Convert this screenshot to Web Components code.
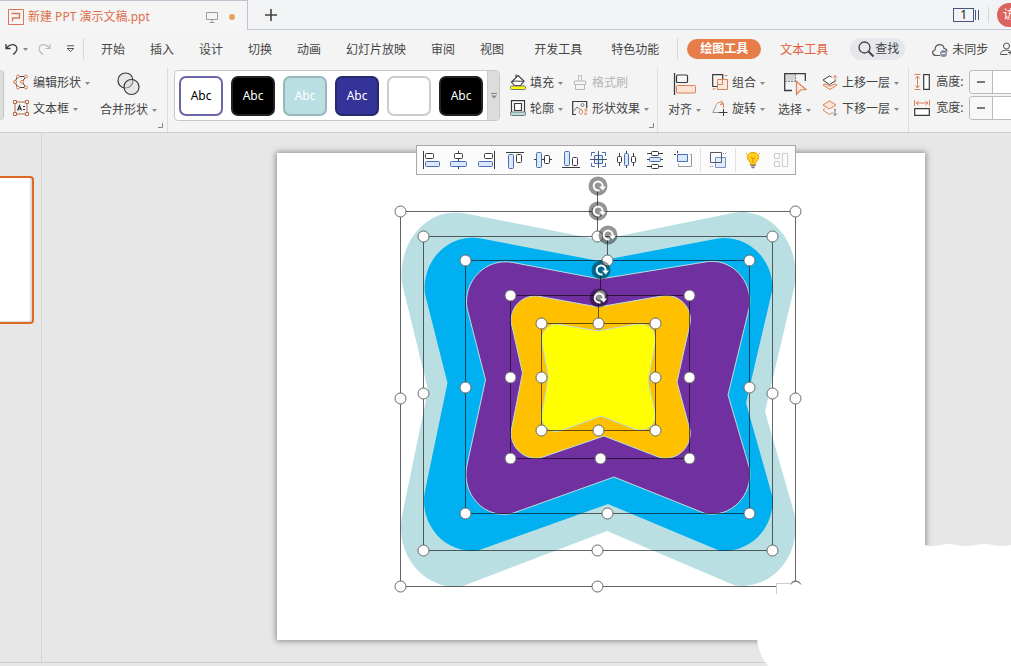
<!DOCTYPE html>
<html lang="zh-CN">
<head>
<meta charset="utf-8">
<title>新建 PPT 演示文稿.ppt</title>
<style>
    body {
        margin: 0;
        font-family: "Noto Sans", "Noto Sans CJK SC", sans-serif;
        font-size: 12px;
        line-height: 18px;
        color: #444;
    }
</style>
</head>
<body>
<office-window></office-window>

<script>
const K = '#3a3a3a';
const O = '#d9825a';
const B = '#4a6fb5';
const F = '#dbe8fb';

// name: [width, height, markup]
const ICONS = {
    ppt: [16, 16, `<g fill="none" stroke="#dd7358"><path d="M.5.5h15v15H.5z"/><path d="M3.500 4.500h8v4.500h-7V12.500" stroke-width="1.300"/></g>`],
    monitor: [12, 12, `<path d="M.5 1.500h11v7H.5zM6 8.500v2.500M3.500 11.500h5" fill="none" stroke="#999"/>`],
    plus: [12, 12, `<path d="M6 0v12M0 6h12" stroke="#444" stroke-width="1.600"/>`],
    undo: [13, 12, `<path d="M1 1v4.500h4.500M1.500 5C4 1.500 8 .8 10.500 2.500c2.500 2 2 6-2.500 9" fill="none" stroke="${K}" stroke-width="1.300"/>`],
    redo: [13, 12, `<path d="M12 1v4.500H7.500M11.500 5C9 1.500 5 .8 2.500 2.500 0 4.500.5 8.500 5 11.500" fill="none" stroke="#bbb" stroke-width="1.200"/>`],
    more: [9, 8, `<path d="M1 .8h7M1.200 3.500l3.300 3 3.300-3z" fill="none" stroke="#555"/>`],
    caret: [5, 3, `<path d="M0 0h5L2.500 3z" fill="#888"/>`],
    dropCaret: [6, 6, `<path d="M0 .5h6" stroke="#888"/><path d="M0 2.500h6L3 5.500z" fill="#888"/>`],
    search: [16, 16, `<circle cx="6.500" cy="6.500" r="5.500" fill="none" stroke="#444" stroke-width="1.300"/><path d="M10.500 10.500l5 5" stroke="#444" stroke-width="2"/>`],
    cloud: [16, 14, `<path d="M8 12.500H4C0 12.500-.5 7.500 3 7 3 0 12 0 12 5.500c2.500 0 3 2 2.800 3" fill="none" stroke="#555" stroke-width="1.200"/><circle cx="11.500" cy="10.500" r="3.500" fill="#8a91a5"/><path d="M9.500 10.500h4" stroke="#fff"/>`],
    person: [12, 14, `<circle cx="6.500" cy="4" r="3" fill="none" stroke="#555"/><path d="M9 8.500C4 7.500.5 9 .5 12.500h7M10 8.500v4M8 10.500h4" fill="none" stroke="#555"/>`],
    editShape: [16, 16, `<path d="M4.500 2.500H13L9 8l4 5.500H4.500L2 8z" fill="none" stroke="#444"/><g fill="#f4f4f5" stroke="${O}"><circle cx="5" cy="2.500" r="1.500"/><circle cx="13" cy="2.500" r="1.500"/><circle cx="9" cy="8" r="1.500"/><circle cx="13" cy="13.500" r="1.500"/><circle cx="5" cy="13.500" r="1.500"/><circle cx="2" cy="8" r="1.500"/></g>`],
    textBox: [16, 16, `<path d="M2 2h12v12H2z" fill="none" stroke="#b56a48"/><path d="M.5.5h3v3h-3zM12.500.5h3v3h-3zM.5 12.500h3v3h-3zM12.500 12.500h3v3h-3z" fill="#f4f4f5" stroke="#b56a48"/><path d="M4.500 10.500L6.500 5.500l2 5M5 9h3" fill="none" stroke="#333" stroke-width="1.200"/><path d="M10 6.500h2M10 9.500h2" stroke="#333"/>`],
    merge: [24, 24, `<g fill="#d9d9d9" fill-opacity=".5" stroke="${K}" stroke-width="1.200"><circle cx="8.500" cy="8.500" r="7.500"/><circle cx="14.500" cy="15" r="7.500"/></g>`],
    fill: [16, 16, `<path d="M8 1.500L14 7l-3.500 4.500h-6L1.500 8zM6 3V.5" fill="#fff" stroke="${K}" stroke-width="1.100"/><path d="M1.500 8c4-2 8 0 12.500-1" fill="none" stroke="${K}"/><rect x=".5" y="12" width="15" height="3.500" rx="1" fill="#ff0" stroke="#777"/>`],
    outline: [16, 16, `<path d="M1.500 12V.7h13V12M4.500 10.500v-7h7v7z" fill="#fff" stroke="${K}" stroke-width="1.200"/><rect x=".5" y="12" width="15" height="3.500" rx="1" fill="#b9dfe2" stroke="#777"/>`],
    brush: [16, 16, `<path d="M6.500 7V1.500h3V7M2.500 7h11v3.500h-11zM3.500 10.500v5h9v-5" fill="none" stroke="#bbb"/>`],
    effect: [16, 16, `<path d="M4 14.500H.7V1.500h14V8M.7 4V1.500" fill="none" stroke="${K}" stroke-width="1.200"/><circle cx="10.500" cy="5" r="1.500" fill="none" stroke="#777"/><path d="M2 11l3-4 4 3" fill="none" stroke="#777"/><path d="M9 9.500l2 2.500-2 2.500L7 12zM14 8.500l1.300 1.500-1.300 1.500-1.300-1.500zM13.500 12.500l1 1.300-1 1.200-1-1.200z" fill="#fff" stroke="${O}"/>`],
    align: [24, 24, `<path d="M1.500 1v22" stroke="${K}" stroke-width="1.300"/><rect x="3.500" y="3" width="11" height="7.500" rx="1" fill="#f8f8f8" stroke="${K}" stroke-width="1.200"/><rect x="3.500" y="13.500" width="19" height="7.500" rx="1" fill="#fbe4d6" stroke="${O}"/>`],
    group: [16, 16, `<path d="M6 12.500H.7V.7h10v4.500" fill="none" stroke="${K}" stroke-width="1.200"/><path d="M5.500 5.500h10v10h-10z" fill="#fbe4d6" fill-opacity=".7" stroke="${O}"/><path d="M10.500 6v4.500H6" fill="none" stroke="${O}"/><path d="M12.500 1.500h3M.5 15h3" stroke="${O}"/>`],
    rotate: [16, 16, `<path d="M8 12.500H.8L4.500 4.500" fill="none" stroke="#999"/><path d="M7 12.500h8.500M11.500 9v7" stroke="${K}"/><path d="M4.500 4c2-2 4.500-2 7 0v4M9 .5l2.500 3.500L8 4.500" fill="none" stroke="${O}"/>`],
    select: [24, 24, `<path d="M2 2h11v7H2z" fill="#d5d5d5"/><path d="M9 18.500H1.700V1.700h20.600V9" fill="none" stroke="${K}" stroke-width="1.300"/><path d="M2 9.500h11M12.500 2v8" stroke="#888" stroke-dasharray="2 1"/><path d="M13.500 9.500l9.500 8-5.500.5-4 4.500z" fill="#fdeade" stroke="${O}" stroke-width="1.200"/>`],
    up: [16, 16, `<path d="M1 11l7 4.500 7-4.500-2-1.200L8 12 3 9.800z" fill="#fbe4d6" stroke="${O}"/><path d="M7.500 2L1 6l6.500 4.500L14 6.500M7.500 2l2 1" fill="#fff" stroke="${K}"/><path d="M13 7V1.500M11 3.500l2-2 2 2" fill="none" stroke="${O}"/>`],
    down: [16, 16, `<path d="M7.500.8L1 5l6.500 4L14 5z" fill="#fbe4d6" stroke="${O}"/><path d="M3 8.500L1 10l6.500 4.500 3-2M12 9l2 1.200" fill="none" stroke="${O}"/><path d="M13 9v6.500M11 13.500l2 2 2-2" fill="none" stroke="#777"/>`],
    heightIcon: [16, 16, `<path d="M.5.5h6M.5 15.500h6M3.500 2v12M1.500 4.500l2-2.500 2 2.500M1.500 11.500l2 2.500 2-2.500" fill="none" stroke="${O}"/><path d="M9.700.7h5.600v14.600H9.700z" fill="#fff" stroke="${K}" stroke-width="1.200"/>`],
    widthIcon: [16, 16, `<path d="M.5 0v6M15.500 0v6M2 3h12M4.500 1L2 3l2.500 2M11.500 1L14 3l-2.500 2" fill="none" stroke="${O}"/><path d="M.7 8.700h14.600v6.600H.7z" fill="#fff" stroke="${K}" stroke-width="1.200"/>`],
    corner: [5, 5, `<path d="M0 4.500h4.500V0" fill="none" stroke="#888"/>`],
    alLeft: [18, 18, `<path d="M1.500 0v18" stroke="${K}"/><rect x="3.500" y="2.500" width="8" height="5" rx="1" fill="#fff" stroke="${K}"/><rect x="3.500" y="10.500" width="14" height="5" rx="1" fill="${F}" stroke="${B}"/>`],
    alCenter: [18, 18, `<path d="M8.500 0v18" stroke="${K}"/><rect x="4.500" y="2.500" width="8" height="5" rx="1" fill="#fff" stroke="${K}"/><rect x=".5" y="10.500" width="16" height="5" rx="1" fill="${F}" stroke="${B}"/>`],
    alRight: [18, 18, `<path d="M16.500 0v18" stroke="${K}"/><rect x="6.500" y="2.500" width="8" height="5" rx="1" fill="#fff" stroke="${K}"/><rect x=".5" y="10.500" width="14" height="5" rx="1" fill="${F}" stroke="${B}"/>`],
    alTop: [18, 18, `<path d="M0 1.500h18" stroke="${K}"/><rect x="2.500" y="3.500" width="5" height="14" rx="1" fill="${F}" stroke="${B}"/><rect x="10.500" y="3.500" width="5" height="8" rx="1" fill="#fff" stroke="${K}"/>`],
    alMiddle: [18, 18, `<path d="M0 8.500h18" stroke="${K}"/><rect x="2.500" y="1.500" width="5" height="15" rx="1" fill="${F}" stroke="${B}"/><rect x="10.500" y="4.500" width="5" height="8" rx="1" fill="#fff" stroke="${K}"/>`],
    alBottom: [18, 18, `<path d="M0 16.500h18" stroke="${K}"/><rect x="2.500" y=".5" width="5" height="14" rx="1" fill="${F}" stroke="${B}"/><rect x="10.500" y="6.500" width="5" height="8" rx="1" fill="#fff" stroke="${K}"/>`],
    toCenter: [18, 18, `<path d="M5 1.500H1.500V5M12 1.500h3.500V5M5 15.500H1.500V12M12 15.500h3.500V12" fill="none" stroke="${B}"/><path d="M4.500 4.500h8v8h-8z" fill="${F}" stroke="${B}"/><path d="M8.500 0v17M0 8.500h17" stroke="#456"/>`],
    distH: [18, 18, `<path d="M1.500 2v13M8.500 0v17M15.500 2v13" stroke="${K}"/><rect x="-.5" y="5.500" width="4" height="6" rx="1" fill="#fff" stroke="${K}"/><rect x="6.500" y="2.500" width="4" height="12" rx="1" fill="${F}" stroke="${B}"/><rect x="13.500" y="5.500" width="4" height="6" rx="1" fill="#fff" stroke="${K}"/>`],
    distV: [18, 18, `<path d="M1 2.500h16M1 8.500h16M1 15.500h16" stroke="${K}"/><rect x="5.500" y=".5" width="7" height="4" rx="1" fill="#fff" stroke="${K}"/><rect x="3.500" y="6.500" width="11" height="4" rx="1" fill="${F}" stroke="${B}"/><rect x="5.500" y="13.500" width="7" height="4" rx="1" fill="#fff" stroke="${K}"/>`],
    sameSize: [18, 18, `<path d="M3.500 3.500h10v7h-10z" fill="${F}" stroke="${B}"/><path d="M3.500 0v3M0 3.500h3" stroke="#333" stroke-dasharray="2 1"/><path d="M16 3.500h1.500v12h-13V13" fill="none" stroke="#999"/>`],
    groupBlue: [18, 18, `<path d="M1.500 1.500h11v10h-11z" fill="none" stroke="#556"/><path d="M6.500 6.500h10v10h-10z" fill="${F}" fill-opacity=".8" stroke="#7b8fc0"/><path d="M12.500 6v5.500H6" fill="none" stroke="#556"/><path d="M14 2.500h3M1 15.500h3" stroke="#88a" stroke-dasharray="1 1"/>`],
    bulb: [18, 18, `<path d="M9 1.500c-7 0-7 7-2.700 9.500v2.500h5.400V11C16 8.500 16 1.500 9 1.500z" fill="#ffcf1f" stroke="#e8a200"/><path d="M7 6l2 2 2-2M9 8v4" fill="none" stroke="#d98a00"/><path d="M6.500 14.500h5M7.500 16.500h3" stroke="#777" stroke-width="1.500"/><path d="M2 2l1 1M16 2l-1 1" stroke="#e8a200"/>`],
    panes: [18, 18, `<path d="M2.500 2.500h5v5h-5zM2.500 10.500h5v5h-5zM10.500 2.500h5v13h-5z" fill="none" stroke="#ccc"/>`]
};

const RESET = `
    button {
        display: flex;
        align-items: center;
        margin: 0;
        padding: 0;
        border: 0;
        background: none;
        font: inherit;
        color: inherit;
        white-space: nowrap;
        cursor: pointer;
    }
`;

class UiIcon extends HTMLElement {
    constructor() {
        super();
        this.attachShadow({mode: 'open'});
    }

    connectedCallback() {
        const [w, h, body] = ICONS[this.getAttribute('name')];
        this.shadowRoot.innerHTML = `
            <style>
                :host { display: block; flex: none; }
                svg { display: block; overflow: visible; }
            </style>
            <svg width="${w}" height="${h}" viewBox="0 0 ${w} ${h}" aria-hidden="true">${body}</svg>
        `;
    }
}
customElements.define('ui-icon', UiIcon);

// icon + label + optional drop-down caret, "big" puts the label under the icon
class ToolButton extends HTMLElement {
    constructor() {
        super();
        this.attachShadow({mode: 'open'});
    }

    connectedCallback() {
        const caret = this.hasAttribute('plain') ? '' : '<ui-icon name="caret"></ui-icon>';
        this.shadowRoot.innerHTML = `
            <style>
                ${RESET}
                :host { display: block; }
                button { gap: 4px; height: 26px; }
                .label { display: flex; align-items: center; gap: 4px; padding-top: 2px; }
                :host([big]) button { flex-direction: column; height: auto; gap: 3px; padding-top: 4px; }
                :host([disabled]) { color: #b4b4b4; }
            </style>
            <button type="button" ${this.hasAttribute('disabled') ? 'disabled' : ''}>
                <ui-icon name="${this.getAttribute('icon')}"></ui-icon>
                <span class="label"><slot></slot>${caret}</span>
            </button>
        `;
    }
}
customElements.define('tool-button', ToolButton);

class TabStrip extends HTMLElement {
    constructor() {
        super();
        this.attachShadow({mode: 'open'}).innerHTML = `
            <style>
                ${RESET}
                :host { display: flex; height: 30px; background: #f2f3f5; }
                .tab {
                    box-sizing: border-box;
                    display: flex;
                    align-items: center;
                    gap: 4px;
                    width: 248px;
                    padding: 3px 12px 0 8px;
                    border-top: 1px solid #c3c3d0;
                    border-right: 1px solid #bfc2d4;
                    background: #f5f5f6;
                    color: #dd7048;
                }
                .name { flex: 1; }
                .dot { width: 6px; height: 6px; margin-left: 7px; border-radius: 3px; background: #e9a25c; }
                .rest {
                    flex: 1;
                    display: flex;
                    align-items: center;
                    padding-left: 17px;
                    border-bottom: 1px solid #c5c8d6;
                }
                .count {
                    margin-left: auto;
                    padding: 0 6px;
                    border: 1px solid #46557c;
                    line-height: 12px;
                    color: #222;
                }
                .bars { box-sizing: border-box; width: 4px; height: 10px; margin: 0 1px; border: solid #46557c; border-width: 0 1px; }
                .sep { width: 1px; height: 16px; margin: 0 8px; background: #d5d5da; }
                .login {
                    overflow: hidden;
                    width: 14px;
                    height: 24px;
                    padding-left: 6px;
                    box-sizing: border-box;
                    border-radius: 12px 0 0 12px;
                    background: #dc6460;
                    color: #fff;
                }
            </style>
            <div class="tab">
                <ui-icon name="ppt"></ui-icon>
                <span class="name">新建 PPT 演示文稿.ppt</span>
                <ui-icon name="monitor"></ui-icon>
                <span class="dot"></span>
            </div>
            <div class="rest">
                <button type="button" aria-label="新建标签"><ui-icon name="plus"></ui-icon></button>
                <button type="button" class="count">1</button>
                <span class="bars"></span>
                <span class="sep"></span>
                <button type="button" class="login">访</button>
            </div>
        `;
    }
}
customElements.define('tab-strip', TabStrip);

class MenuBar extends HTMLElement {
    constructor() {
        super();
        this.attachShadow({mode: 'open'});
    }

    connectedCallback() {
        const items = list => list.map(t => `<button type="button">${t}</button>`).join('');
        this.shadowRoot.innerHTML = `
            <style>
                ${RESET}
                :host {
                    display: flex;
                    align-items: center;
                    height: 38px;
                    padding-left: 5px;
                    background: #f4f4f5;
                    white-space: nowrap;
                }
                :host > * { flex: none; }
                .quick { display: flex; align-items: center; }
                .undo { gap: 5px; margin-right: 10px; }
                .redo { margin-right: 15px; }
                .sep { width: 1px; height: 22px; background: #d9d9dc; }
                nav { display: flex; gap: 25px; margin-left: 17px; }
                nav, .text, .sync { padding-top: 2px; }
                nav.wide { gap: 29px; margin: 0 18px 0 30px; }
                .quick + .sep { margin-left: 8px; }
                .active {
                    height: 20px;
                    margin: 0 19px 0 9px;
                    padding: 0 13px;
                    border-radius: 10px;
                    background: #e67c48;
                    color: #fff;
                    font-weight: bold;
                }
                .text { color: #e0603a; }
                .find {
                    gap: 1px;
                    height: 22px;
                    margin: 0 27px 0 22px;
                    padding: 0 6px 0 8px;
                    border-radius: 11px;
                    background: #e5e7ec;
                }
                .sync { gap: 4px; margin-right: 12px; }
            </style>
            <div class="quick">
                <button type="button" class="undo" aria-label="撤销"><ui-icon name="undo"></ui-icon><ui-icon name="caret"></ui-icon></button>
                <button type="button" class="redo" aria-label="恢复"><ui-icon name="redo"></ui-icon></button>
                <button type="button" aria-label="更多"><ui-icon name="more"></ui-icon></button>
            </div>
            <span class="sep"></span>
            <nav>${items(['开始', '插入', '设计', '切换', '动画', '幻灯片放映', '审阅', '视图'])}</nav>
            <nav class="wide">${items(['开发工具', '特色功能'])}</nav>
            <span class="sep"></span>
            <button type="button" class="active">绘图工具</button>
            <button type="button" class="text">文本工具</button>
            <button type="button" class="find"><ui-icon name="search"></ui-icon>查找</button>
            <button type="button" class="sync"><ui-icon name="cloud"></ui-icon>未同步</button>
            <button type="button" aria-label="协作"><ui-icon name="person"></ui-icon></button>
        `;
    }
}
customElements.define('menu-bar', MenuBar);

class StyleGallery extends HTMLElement {
    constructor() {
        super();
        this.attachShadow({mode: 'open'}).innerHTML = `
            <style>
                ${RESET}
                :host {
                    display: flex;
                    border: 1px solid #c8c8c8;
                    border-radius: 4px;
                    background: #fff;
                    overflow: hidden;
                }
                .list { display: flex; gap: 8px; padding: 5px 4px 4px; }
                .list button {
                    box-sizing: border-box;
                    justify-content: center;
                    width: 44px;
                    height: 40px;
                    border: 2px solid #222;
                    border-radius: 7px;
                    background: #000;
                    color: #fff;
                }
                .list .line { border-color: #6a68a8; background: #fff; color: #000; }
                .list .teal { border-color: #97b8ba; background: #b9dfe2; }
                .list .navy { border-color: #28286c; background: #333398; }
                .list .blank { border-color: #ccc; background: #fff; }
                .drop { justify-content: center; width: 12px; background: #dcdcdc; border-left: 1px solid #ccc; }
            </style>
            <div class="list">
                <button type="button" class="line">Abc</button>
                <button type="button">Abc</button>
                <button type="button" class="teal">Abc</button>
                <button type="button" class="navy">Abc</button>
                <button type="button" class="blank" aria-label="空白样式"></button>
                <button type="button">Abc</button>
            </div>
            <button type="button" class="drop" aria-label="更多样式"><ui-icon name="dropCaret"></ui-icon></button>
        `;
    }
}
customElements.define('style-gallery', StyleGallery);

class SizeField extends HTMLElement {
    constructor() {
        super();
        this.attachShadow({mode: 'open'});
    }

    connectedCallback() {
        this.shadowRoot.innerHTML = `
            <style>
                ${RESET}
                :host { display: flex; align-items: center; gap: 6px; height: 24px; }
                label { width: 27px; white-space: nowrap; }
                .box {
                    flex: 1;
                    display: flex;
                    box-sizing: border-box;
                    height: 24px;
                    border: 1px solid #bbb;
                    border-right: 0;
                    border-radius: 4px 0 0 4px;
                    background: #fff;
                    overflow: hidden;
                }
                button { justify-content: center; width: 23px; background: #f7f7f7; border-right: 1px solid #bbb; }
                button::before { content: ""; width: 8px; height: 2px; background: #777; }
                input { flex: 1; min-width: 0; width: 0; padding: 0; border: 0; outline: 0; font: inherit; }
            </style>
            <ui-icon name="${this.getAttribute('icon')}"></ui-icon>
            <label for="size">${this.getAttribute('label')}</label>
            <span class="box">
                <button type="button" aria-label="减小"></button>
                <input id="size" type="text">
            </span>
        `;
    }
}
customElements.define('size-field', SizeField);

class RibbonBar extends HTMLElement {
    constructor() {
        super();
        this.attachShadow({mode: 'open'}).innerHTML = `
            <style>
                :host {
                    display: flex;
                    align-items: flex-start;
                    height: 64px;
                    background: #f4f4f5;
                    border-bottom: 1px solid #d0d0d0;
                }
                :host > * { flex: none; }
                .stub { width: 3px; height: 50px; margin: 2px 9px 0 0; border-right: 1px solid #c4c4c4; border-radius: 0 4px 4px 0; background: #dedee0; }
                .col { display: flex; flex-direction: column; padding-top: 1px; margin-right: 10px; }
                .near { margin-right: 9px; }
                .last { margin-right: 0; }
                .corner { align-self: flex-end; margin: 0 4px 4px 1px; }
                .last + .corner { margin-left: 0; margin-right: 3px; }
                .sep { align-self: stretch; width: 1px; background: #dcdcdf; }
                style-gallery { margin: 2px 10px 0 6px; }
                .align { margin: 0 11px 0 10px; }
                .select { margin: 0 11px 0 3px; }
                .sizes { flex: 1; display: flex; flex-direction: column; gap: 2px; padding: 2px 0 0 5px; }
            </style>
            <span class="stub"></span>
            <div class="col">
                <tool-button icon="editShape">编辑形状</tool-button>
                <tool-button icon="textBox">文本框</tool-button>
            </div>
            <tool-button big icon="merge">合并形状</tool-button>
            <ui-icon class="corner" name="corner"></ui-icon>
            <span class="sep"></span>
            <style-gallery></style-gallery>
            <div class="col near">
                <tool-button icon="fill">填充</tool-button>
                <tool-button icon="outline">轮廓</tool-button>
            </div>
            <div class="col last">
                <tool-button icon="brush" plain disabled>格式刷</tool-button>
                <tool-button icon="effect">形状效果</tool-button>
            </div>
            <ui-icon class="corner" name="corner"></ui-icon>
            <span class="sep"></span>
            <tool-button big class="align" icon="align">对齐</tool-button>
            <div class="col">
                <tool-button icon="group">组合</tool-button>
                <tool-button icon="rotate">旋转</tool-button>
            </div>
            <tool-button big class="select" icon="select">选择</tool-button>
            <div class="col near">
                <tool-button icon="up">上移一层</tool-button>
                <tool-button icon="down">下移一层</tool-button>
            </div>
            <span class="sep"></span>
            <div class="sizes">
                <size-field icon="heightIcon" label="高度:"></size-field>
                <size-field icon="widthIcon" label="宽度:"></size-field>
            </div>
        `;
    }
}
customElements.define('ribbon-bar', RibbonBar);

class FloatBar extends HTMLElement {
    constructor() {
        super();
        this.attachShadow({mode: 'open'});
    }

    connectedCallback() {
        const group = names => names.map(([n, t]) =>
            `<button type="button" aria-label="${t}"><ui-icon name="${n}"></ui-icon></button>`).join('');
        this.shadowRoot.innerHTML = `
            <style>
                ${RESET}
                :host { display: flex; border: 1px solid #a8a8a8; background: #fbfbfb; }
                button { justify-content: center; width: 28px; height: 28px; }
                .sep { width: 1px; margin: 2px 3px; background: #e2e2e2; }
            </style>
            ${group([['alLeft', '左对齐'], ['alCenter', '水平居中'], ['alRight', '右对齐'], ['alTop', '顶端对齐'],
                ['alMiddle', '垂直居中'], ['alBottom', '底端对齐'], ['toCenter', '中心对齐'], ['distH', '横向分布'],
                ['distV', '纵向分布'], ['sameSize', '等尺寸']])}
            <span class="sep"></span>
            ${group([['groupBlue', '组合']])}
            <span class="sep"></span>
            ${group([['bulb', '智能'], ['panes', '版式']])}
        `;
    }
}
customElements.define('float-bar', FloatBar);

const SHAPES = [
    ['#b9dfe2', 'none', 'M402 283A54 62 0 0 1 463 213L600 240 735 212.500A54 62 0 0 1 795 284L765 411.500 794.500 514A54 59 0 0 1 735 585.500L607 531 463 586A54 59 0 0 1 402 516L428 390z'],
    ['#00b0f0', 'none', 'M425 294A48 50 0 0 1 481 238.500L599 261 718 238.500A48 50 0 0 1 772.500 289L746 403 772.500 497A48 50 0 0 1 719 550.500L608 504 478 550.500A48 50 0 0 1 425 491L447.500 383z'],
    ['#7030a0', '#b9dfe2', 'M467 308A39 40 0 0 1 513 262.500L600 279 705 262A38 40 0 0 1 749.500 307L728 395 749.500 468A38 40 0 0 1 705 513.500L614 477 512 513.500A38 40 0 0 1 467 465L485.500 380z'],
    ['#ffc000', '#b9dfe2', 'M511.500 324A24 24 0 0 1 540 296.500L598 307 662 296A24 24 0 0 1 689.500 326L677 382 690 430A25 25 0 0 1 661 458L604 436 540 458A25 25 0 0 1 511.500 429L522.500 373z'],
    ['#ffff00', '#b9dfe2', 'M542.500 345A15 16 0 0 1 560 324.500L598 331 637 324A16 16 0 0 1 655 344L648 381 655.500 414A15 15 0 0 1 636 429.500L601 416 563 430A15 15 0 0 1 542.500 411L548.500 377z']
];

// left, top, right, bottom, x of the middle handles, y of the middle handles
const FRAMES = [
    [401, 211, 796, 586, 598, 398],
    [424, 236, 773, 550, 598, 393],
    [466, 260, 750, 513, 608, 387],
    [511, 295, 690, 458, 601, 377],
    [542, 323, 656, 430, 599, 377]
];

class SlideCanvas extends HTMLElement {
    constructor() {
        super();
        this.attachShadow({mode: 'open'});
    }

    connectedCallback() {
        this.render();
    }

    handles([l, t, r, b, mx, my]) {
        return [[l, t], [mx, t], [r, t], [l, my], [r, my], [l, b], [mx, b], [r, b]]
            .map(([x, y]) => `<circle cx="${x - .5}" cy="${y + .5}" r="5.500"/>`).join('');
    }

    frame([l, t, r, b, mx]) {
        return `<path d="M${l - .5} ${t + .5}H${r - .5}V${b + .5}H${l - .5}zM${mx - .5} ${t}V${t - 20}"/>`;
    }

    rotator([, t, , , mx]) {
        return `
            <g transform="translate(${mx} ${t - 25})">
                <circle r="9.500" fill="#000" fill-opacity=".42"/>
                <path d="M1.500 4.200A4.500 4.500 0 1 1 4.500 1" fill="none" stroke="#fff" stroke-width="2"/>
                <path d="M1 .5h7L4.700 4.500z" fill="#fff"/>
            </g>`;
    }

    render() {
        this.shadowRoot.innerHTML = `
            <style>
                :host { display: block; position: relative; background: #fff; box-shadow: 0 0 6px 1px rgba(0, 0, 0, .4); }
                svg { display: block; width: 100%; height: auto; overflow: visible; }
                float-bar { position: absolute; left: 139px; top: -8px; }
            </style>
            <svg viewBox="277 153 648 487" role="img" aria-label="图形">
                ${SHAPES.map(([fill, line, d]) => `<path d="${d}" fill="${fill}" stroke="${line}"/>`).join('')}
                <g fill="none" stroke="#000" stroke-opacity=".6">${FRAMES.map(this.frame).join('')}</g>
                <g fill="#fff" stroke="#666">${FRAMES.map(this.handles).join('')}</g>
                ${FRAMES.map(this.rotator).join('')}
                <path d="M776.500 583.500h30v16h-30z" fill="#fff"/>
                <path d="M776.500 594v-10.500H790" fill="none" stroke="#ccc"/>
                <path d="M791 584.500a5.500 5.500 0 0 1 10 0" fill="none" stroke="#777"/>
            </svg>
            <float-bar></float-bar>
        `;
    }
}
customElements.define('slide-canvas', SlideCanvas);

class WorkSpace extends HTMLElement {
    constructor() {
        super();
        this.attachShadow({mode: 'open'}).innerHTML = `
            <style>
                :host { position: relative; display: flex; flex-direction: column; background: #e7e7e7; overflow: hidden; }
                .main { flex: 1; display: flex; }
                aside { width: 41px; border-right: 1px solid #d4d4d6; }
                .thumb {
                    box-sizing: border-box;
                    width: 34px;
                    height: 148px;
                    margin-top: 43px;
                    padding: 0;
                    border: 2px solid #dc6a24;
                    border-left: 0;
                    border-radius: 0 4px 4px 0;
                    background: #fff;
                    box-shadow: inset -2px -1px 1px #ddd;
                    display: block;
                }
                .editor { flex: 1; padding: 20px 86px 22px 235px; }
                .status { height: 3px; border-top: 1px solid #d0d0d0; }
                .cover { position: absolute; right: 0; bottom: 0; display: block; }
            </style>
            <div class="main">
                <aside><button type="button" class="thumb" aria-label="幻灯片 1"></button></aside>
                <div class="editor"><slide-canvas></slide-canvas></div>
            </div>
            <div class="status"></div>
            <svg class="cover" width="254" height="122" viewBox="757 544 254 122" aria-hidden="true">
                <path d="M925 545q8 2 16 0t16 0 18 0 18 0 18 0V666H768q-9-11-11-27V600H925z" fill="#fff"/>
            </svg>
        `;
    }
}
customElements.define('work-space', WorkSpace);

class OfficeWindow extends HTMLElement {
    constructor() {
        super();
        this.attachShadow({mode: 'open'}).innerHTML = `
            <style>
                :host { display: flex; flex-direction: column; min-height: 100vh; overflow: hidden; }
                :host > * { flex: none; }
                work-space { flex: 1 0 auto; }
            </style>
            <tab-strip></tab-strip>
            <menu-bar></menu-bar>
            <ribbon-bar></ribbon-bar>
            <work-space></work-space>
        `;
    }
}
customElements.define('office-window', OfficeWindow);
</script>
</body>
</html>
